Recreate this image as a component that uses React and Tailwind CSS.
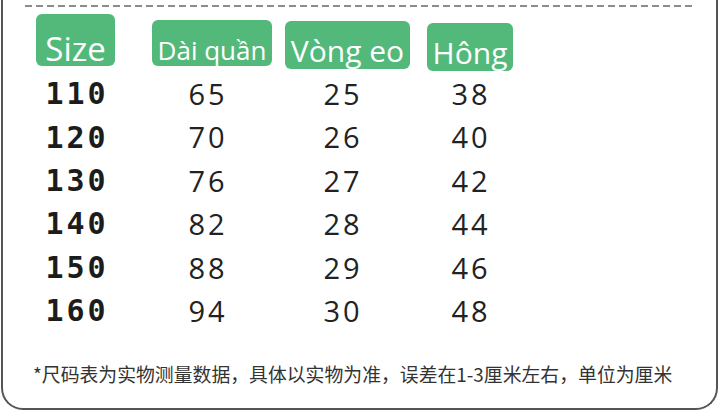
import React from 'react';

const headers = [
  { label: 'Size', box: 'ml-[33px] mt-[14px] w-[79px] h-[52px]', text: 'text-[33px] pb-[1px]' },
  { label: 'Dài quần', box: 'ml-[37px] mt-[20px] w-[120px] h-[46px]', text: 'text-[26px] pb-[3px]' },
  { label: 'Vòng eo', box: 'ml-[13px] mt-[21px] w-[125px] h-[48px]', text: 'text-[30px] pb-[3px]' },
  { label: 'Hông', box: 'ml-[17px] mt-[23px] w-[86px] h-[48px]', text: 'text-[30px] pb-[3px]' },
];

const rows = [
  ['110', '65', '25', '38'],
  ['120', '70', '26', '40'],
  ['130', '76', '27', '42'],
  ['140', '82', '28', '44'],
  ['150', '88', '29', '46'],
  ['160', '94', '30', '48'],
];

const App = () => {
  return (
    <div className="w-[720px] h-[412px] bg-white overflow-hidden">
      <div className="ml-[1px] w-[717px] h-[410px] border-x-2 border-b-2 border-[#555] rounded-b-[22px] flex flex-col">
        {/* dashed divider */}
        <div className="mt-[5px] ml-[22px] w-[667px] h-[2px] bg-[repeating-linear-gradient(90deg,#8c8c8c_0_7px,transparent_7px_11px)]" />

        {/* column headers */}
        <div className="flex items-start h-[64px] -mt-[7px]">
          {headers.map((h) => (
            <div
              key={h.label}
              className={`${h.box} shrink-0 bg-[#52b97a] rounded-[6px] overflow-hidden flex items-end justify-center`}
            >
              <span className={`${h.text} leading-none text-white font-['Open_Sans',sans-serif]`}>
                {h.label}
              </span>
            </div>
          ))}
        </div>

        {/* size rows */}
        <div className="mt-[8px] flex flex-col">
          {rows.map((r) => (
            <div key={r[0]} className="h-[43.4px] flex items-center">
              <div className="ml-[24px] w-[100px] text-center font-['DejaVu_Sans_Mono',monospace] font-bold text-[30px] tracking-[3px] text-[#1c1c1c]">
                {r[0]}
              </div>
              <div className="ml-[31px] w-[100px] text-center font-['Open_Sans',sans-serif] text-[29px] tracking-[3px] text-[#222]">
                {r[1]}
              </div>
              <div className="ml-[35px] w-[100px] text-center font-['Open_Sans',sans-serif] text-[29px] tracking-[3px] text-[#222]">
                {r[2]}
              </div>
              <div className="ml-[28px] w-[100px] text-center font-['Open_Sans',sans-serif] text-[29px] tracking-[3px] text-[#222]">
                {r[3]}
              </div>
            </div>
          ))}
        </div>

        {/* footnote */}
        <p className="mt-auto mb-[24px] ml-[30px] text-[18.85px] leading-none text-[#333] font-['Noto_Sans_CJK_SC','Noto_Sans',sans-serif]">
          *尺码表为实物测量数据，具体以实物为准，误差在1-3厘米左右，单位为厘米
        </p>
      </div>
    </div>
  );
};

export default App;
